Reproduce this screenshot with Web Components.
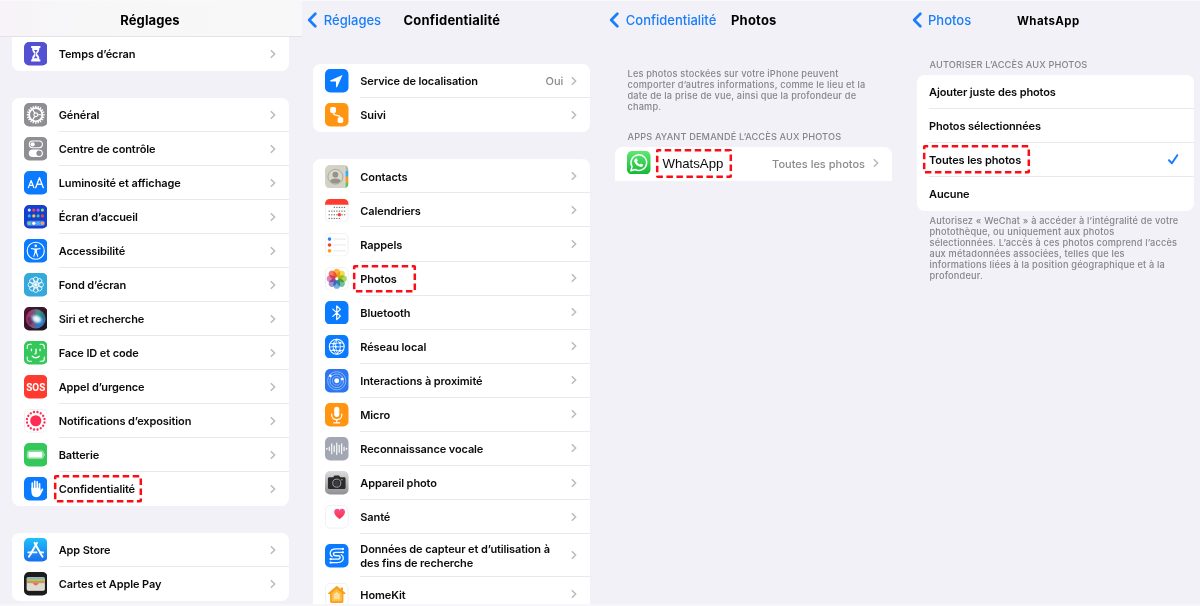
<!DOCTYPE html>
<html lang="fr">
<head>
<meta charset="utf-8">
<title>Réglages</title>
<style>
html,body{margin:0;height:100%;overflow:hidden}
body{background:#f2f1f7;font-family:Inter,"Liberation Sans",sans-serif;color:#0b0b0c}
</style>
</head>
<body>
<settings-board>
  <phone-screen style="--gutter:11.7px">
    <nav-bar slot="bar" frosted><span slot="title">Réglages</span></nav-bar>
    <settings-card cut style="margin-top:0">
      <settings-row icon="hourglass" nav>Temps d’écran</settings-row>
    </settings-card>
    <settings-card style="margin-top:27px">
      <settings-row icon="gear" nav>Général</settings-row>
      <settings-row icon="toggles" nav>Centre de contrôle</settings-row>
      <settings-row icon="aa" nav>Luminosité et affichage</settings-row>
      <settings-row icon="home" nav>Écran d’accueil</settings-row>
      <settings-row icon="access" nav>Accessibilité</settings-row>
      <settings-row icon="flower" nav>Fond d’écran</settings-row>
      <settings-row icon="siri" nav>Siri et recherche</settings-row>
      <settings-row icon="face" nav>Face ID et code</settings-row>
      <settings-row icon="sos" nav>Appel d’urgence</settings-row>
      <settings-row icon="exposure" nav>Notifications d’exposition</settings-row>
      <settings-row icon="battery" nav>Batterie</settings-row>
      <settings-row icon="hand" nav mark="42 2.5 88 27.5">Confidentialité</settings-row>
    </settings-card>
    <settings-card style="margin-top:27px">
      <settings-row icon="store" nav>App Store</settings-row>
      <settings-row icon="wallet" nav>Cartes et Apple Pay</settings-row>
    </settings-card>
  </phone-screen>

  <phone-screen style="--gutter:11.3px">
    <nav-bar slot="bar" back="Réglages" style="--title:101.500px;--lead:5.300px"><span slot="title" style="letter-spacing:.2px">Confidentialité</span></nav-bar>
    <settings-card style="margin-top:27px">
      <settings-row icon="location" nav value="Oui">Service de localisation</settings-row>
      <settings-row icon="tracking" nav>Suivi</settings-row>
    </settings-card>
    <settings-card style="margin-top:27.300px;--row:34.080px">
      <settings-row icon="contacts" nav>Contacts</settings-row>
      <settings-row icon="calendar" nav>Calendriers</settings-row>
      <settings-row icon="reminders" nav>Rappels</settings-row>
      <settings-row icon="photos" nav mark="40 3.200 63 27.5">Photos</settings-row>
      <settings-row icon="bluetooth" nav>Bluetooth</settings-row>
      <settings-row icon="globe" nav>Réseau local</settings-row>
      <settings-row icon="nearby" nav>Interactions à proximité</settings-row>
      <settings-row icon="mic" nav>Micro</settings-row>
      <settings-row icon="voice" nav>Reconnaissance vocale</settings-row>
      <settings-row icon="camera" nav>Appareil photo</settings-row>
      <settings-row icon="health" nav>Santé</settings-row>
      <settings-row icon="sensor" nav style="--row:43.3px">Données de capteur et d’utilisation à<br>des fins de recherche</settings-row>
      <settings-row icon="homekit" nav>HomeKit</settings-row>
    </settings-card>
  </phone-screen>

  <phone-screen style="--gutter:12px">
    <nav-bar slot="bar" back="Confidentialité" style="--title:128px;--lead:6.300px"><span slot="title" style="letter-spacing:.2px">Photos</span></nav-bar>
    <settings-note style="margin-top:32px">Les photos stockées sur votre iPhone peuvent<br>comporter d’autres informations, comme le lieu et la<br>date de la prise de vue, ainsi que la profondeur de<br>champ.</settings-note>
    <settings-note caption style="margin-top:19.500px">APPS AYANT DEMANDÉ L’ACCÈS AUX PHOTOS</settings-note>
    <settings-card flat style="margin-top:3.5px">
      <settings-row icon="whatsapp" nav big value="Toutes les photos" mark="41 2.300 76 29">WhatsApp</settings-row>
    </settings-card>
  </phone-screen>

  <phone-screen style="--gutter:12px">
    <nav-bar slot="bar" back="Photos" style="--title:112px;--lead:6.500px"><span slot="title" style="font-size:11.5px;letter-spacing:.4px">WhatsApp</span></nav-bar>
    <settings-note caption style="margin-top:22.500px">AUTORISER L’ACCÈS AUX PHOTOS</settings-note>
    <settings-card plain style="margin-top:4.5px">
      <settings-row>Ajouter juste des photos</settings-row>
      <settings-row>Photos sélectionnées</settings-row>
      <settings-row checked mark="6 2 107 28.5">Toutes les photos</settings-row>
      <settings-row>Aucune</settings-row>
    </settings-card>
    <settings-note style="margin-top:5.500px">Autorisez « WeChat » à accéder à l’intégralité de votre<br>photothèque, ou uniquement aux photos<br>sélectionnées. L’accès à ces photos comprend l’accès<br>aux métadonnées associées, telles que les<br>informations liées à la position géographique et à la<br>profondeur.</settings-note>
  </phone-screen>
</settings-board>

<script>
const tile = (fill, inner) => `<rect width="24" height="24" rx="5.2" fill="${fill}"/>${inner}`;
const whiteTile = inner => `<rect x=".4" y=".4" width="23.2" height="23.2" rx="5" fill="#fff" stroke="#ececef" stroke-width=".8"/>${inner}`;
const ring = (n, f) => Array.from({length:n}, (_, i) => f(i * 360 / n, i)).join('');
const line = (d, w = 1.3, c = '#fff') => `<path d="${d}" fill="none" stroke="${c}" stroke-width="${w}" stroke-linecap="round" stroke-linejoin="round"/>`;
const dots = (pts, r) => pts.map(([x, y, c]) => `<circle cx="${x}" cy="${y}" r="${r}" fill="${c}"/>`).join('');

const ICONS = {
  hourglass: tile('#5350d3', `<path d="M7.3 4.2h9.4v1.9h-1c0 3-1 4.300-2.500 5.900 1.500 1.600 2.500 2.900 2.500 5.900h1v1.900H7.300v-1.900h1c0-3 1-4.300 2.500-5.900-1.500-1.600-2.500-2.900-2.500-5.900h-1z" fill="#fff"/><path d="M10.200 8.200h3.600L12.300 10.400v4l1.700 2.200H10l1.700-2.200v-4z" fill="#5350d3"/>`),
  gear: tile('#8e8e93', ring(20, a => `<rect x="11.3" y="2.800" width="1.400" height="2.500" fill="#fff" transform="rotate(${a} 12 12)"/>`) + `<circle cx="12" cy="12" r="6.700" fill="none" stroke="#fff" stroke-width="1.700"/><circle cx="12" cy="12" r="1.900" fill="none" stroke="#fff" stroke-width="1.100"/>` + line('M13.900 12H18.500M11 10.300L8.700 6.300M11 13.700L8.700 17.700', 1.2)),
  toggles: tile('#8e8e93', `<rect x="5.400" y="4.100" width="13.400" height="6.800" rx="3.400" fill="none" stroke="#fff" stroke-width="1.100"/><circle cx="8.800" cy="7.500" r="2.200" fill="#fff"/><rect x="4.900" y="12.700" width="14.400" height="7.800" rx="3.900" fill="#fff"/><circle cx="15.400" cy="16.600" r="2.700" fill="#8e8e93"/>`),
  aa: tile('#0a7aff', line('M4.500 17L7.300 9.700L10.100 17M5.500 14.600H9.100', 1.25) + line('M11.900 17L15.800 6.800L19.700 17M13.200 13.500H18.400', 1.35)),
  home: tile('#1540cf', `<rect x="2.800" y="16" width="18.400" height="5.300" rx="1.800" fill="#5c8be6"/>` + dots([[5.400,5.200,'#cfe0f5'],[10,5.200,'#fb4257'],[14.400,5.200,'#a868da'],[18.800,5.200,'#8be15c'],[5.400,11.200,'#27b6f6'],[10,11.200,'#ffc33d'],[14.400,11.200,'#3fbfa6'],[18.800,11.200,'#f5413f'],[5.400,18.700,'#67dd83'],[10,18.700,'#fff'],[14.400,18.700,'#38bdf8'],[18.800,18.700,'#ffa24a']], 1.65)),
  access: tile('#0a7aff', `<circle cx="12" cy="12" r="8.700" fill="none" stroke="#fff" stroke-width="1.100"/><circle cx="12" cy="7" r="1.300" fill="#fff"/><path d="M7.200 9.200L11 9.700h2l3.800-.5v.9l-3.500.9v2.600l1.300 4.400-.9.300-1.500-4h-.4l-1.500 4-.9-.3 1.300-4.400v-2.600l-3.500-.9z" fill="#fff"/>`),
  flower: tile('#35a9dc', ring(8, a => `<circle cx="12" cy="6.700" r="2.500" fill="none" stroke="#fff" stroke-width=".85" transform="rotate(${a} 12 12)"/>`) + ring(8, a => `<circle cx="12" cy="9.900" r="1.400" fill="none" stroke="#fff" stroke-width=".5" transform="rotate(${a} 12 12)"/>`) + `<circle cx="12" cy="12" r="1.200" fill="#fff"/>`),
  siri: `<defs><linearGradient id="s1" x1="0" x2="1"><stop offset="0" stop-color="#b3265c"/><stop offset=".42" stop-color="#7a5a78"/><stop offset=".6" stop-color="#3c9b90"/><stop offset="1" stop-color="#1c6f70"/></linearGradient><radialGradient id="s2"><stop offset="0" stop-color="#fff"/><stop offset=".45" stop-color="#d3e6f6" stop-opacity=".95"/><stop offset="1" stop-color="#4aa5d8" stop-opacity="0"/></radialGradient><linearGradient id="s3" x1="0" x2="1" y1="0" y2="1"><stop offset="0" stop-color="#541233"/><stop offset="1" stop-color="#16161f"/></linearGradient></defs>` + tile('url(#s3)', `<circle cx="12" cy="12" r="9.800" fill="url(#s1)"/><path d="M12.500 12.500L21.800 11a9.800 9.800 0 0 1-11 10.700z" fill="#2c6fd0" opacity=".75"/><path d="M3 11c4-2 7 0 9 3-3 1-4 3-6 5z" fill="#3b2152" opacity=".5"/><ellipse cx="13" cy="12.300" rx="7.500" ry="5.500" fill="url(#s2)" transform="rotate(25 13 12.300)"/><circle cx="12" cy="12" r="9.800" fill="none" stroke="#8aa4b4" stroke-opacity=".35" stroke-width=".5"/>`),
  face: tile('#34c759', line('M3.300 7.600V6c0-1.700 1-2.700 2.700-2.700h1.600M16.400 3.300H18c1.700 0 2.700 1 2.700 2.700v1.600M20.700 16.400V18c0 1.700-1 2.700-2.700 2.700h-1.600M7.600 20.700H6c-1.700 0-2.700-1-2.700-2.700v-1.600', 1.15) + line('M7.600 8.300V9.900M16.400 8.300V9.900M12.300 8.300V12.200c0 .7-.3 1-1.100 1M8.400 15.600c2 2 5.200 2 7.200 0', 1.35)),
  sos: tile('#ff3b30', `<text x="12" y="16.300" text-anchor="middle" font-family="Roboto,Inter,sans-serif" font-size="11.900" font-weight="700" textLength="19.400" lengthAdjust="spacingAndGlyphs" fill="#fff">SOS</text>`),
  exposure: whiteTile(`<circle cx="12" cy="12" r="5.700" fill="#ff2d55"/>` + ring(16, a => `<circle cx="12" cy="2.900" r="1.200" fill="#ff2d55" transform="rotate(${a + 11} 12 12)"/>`)),
  battery: tile('#34c759', `<rect x="3.300" y="7.900" width="16.600" height="8" rx="2" fill="#fff" fill-opacity=".35" stroke="#fff" stroke-opacity=".55" stroke-width=".7"/><rect x="4.600" y="9.100" width="14" height="5.600" rx="1" fill="#fff"/><path d="M20.700 10.500c1 .3 1 2.500 0 2.800z" fill="#fff" opacity=".7"/>`),
  hand: tile('#0a7aff', line('M8.500 13V6.400M11 12V4.600M13.500 12V5M15.800 13V7', 1.85) + `<path d="M7.600 11h9.100v3l1.300-1.800c.6-.8 2-.3 1.600.7l-2.500 5c-.9 1.900-2.300 2.700-4.600 2.700-3.300 0-4.900-2-4.900-5.200z" fill="#fff"/><path d="M9.750 5.500v6M12.250 5v6M14.700 5.500v6" stroke="#0a7aff" stroke-width=".5" stroke-opacity=".7"/>`),
  store: `<defs><linearGradient id="as" x2="0" y2="1"><stop stop-color="#1fc2fb"/><stop offset="1" stop-color="#1a6df0"/></linearGradient></defs>` + tile('url(#as)', line('M13.200 5L6.300 17M10.800 5L17.700 17', 2) + line('M4.400 14.700H12.700M16.500 14.700H19.600M5.600 18.200L5 19.200M18.400 18.200L19 19.200', 1.9)),
  wallet: tile('#1c1c1e', `<rect x="2.700" y="5" width="18.600" height="14.200" rx="1.800" fill="#d4d2c6"/><path d="M3 6.500c.3-.9.800-1.200 1.500-1.200h15c.7 0 1.200.3 1.500 1.200v1.300H3z" fill="#7bb3c9"/><rect x="3" y="7.400" width="18" height="1.800" fill="#e0b445"/><rect x="3" y="9.200" width="18" height="1.600" fill="#8db35c"/><path d="M3 10.800h18v.9h-5.700c-.8 0-1 2.200-3.300 2.200s-2.500-2.200-3.300-2.200H3z" fill="#ee6a5f"/><path d="M3 11.500h6c.8 0 1 1.600 3 1.600s2.200-1.600 3-1.600h6V17.700c0 .8-.5 1.200-1.200 1.200H4.200c-.7 0-1.200-.4-1.200-1.200z" fill="#dedbd0"/><path d="M8.700 11.600c.8 0 1.100 2.200 3.300 2.200s2.500-2.200 3.300-2.200z" fill="#ee6a5f"/>`),
  location: tile('#0a7aff', `<path d="M17.900 6.100L5.700 11.600c-.7.4-.5 1.200.3 1.200h5.200v5.200c0 .8.900 1 1.200.3z" fill="#fff"/>`),
  tracking: tile('#ff9510', `<rect x="5.300" y="4.200" width="5.900" height="5.900" rx="1.600" fill="#fff"/><rect x="12.900" y="14.600" width="5.700" height="5.700" rx="1.600" fill="#fff"/>` + line('M8.300 9.500c0 5 7.500 1.500 7.500 6', 1.35)),
  contacts: `<defs><clipPath id="cc"><rect width="24" height="24" rx="5.200"/></clipPath></defs><g clip-path="url(#cc)"><rect width="24" height="24" fill="#d3d2c6"/><path d="M20.600 0H24v6h-3.400z" fill="#b7b5ab"/><path d="M20.600 6H24v6h-3.400z" fill="#3cabf2"/><path d="M20.600 12H24v6h-3.400z" fill="#fb9520"/><path d="M20.600 18H24v6h-3.400z" fill="#4dc95f"/><path d="M20.600 0v24" stroke="#e8e8e0" stroke-width=".6"/><circle cx="10.600" cy="12" r="7.600" fill="#d9d8cd" stroke="#a5a399" stroke-width=".9"/><circle cx="10.600" cy="9.900" r="2.900" fill="#96948a"/><path d="M5.200 16.300c1.300-3.300 9.500-3.300 10.800 0-2.700 3.500-8.100 3.500-10.800 0z" fill="#96948a"/></g>`,
  calendar: whiteTile(`<path d="M0 5.800V5C0 2 2 0 5 0h14c3 0 5 2 5 5v.8z" fill="#ff3b30"/>` + [[8.900,8.600,5],[3.700,12.400,7],[3.700,16.100,7],[3.700,19.900,5]].map(([x,y,n]) => Array.from({length:n}, (_, i) => `<rect x="${x + i * 2.600}" y="${y - .6}" width="1.300" height="1.200" fill="#77777c"/>`).join('')).join('') + `<circle cx="14.700" cy="16.100" r="1.800" fill="#ff3b30"/>`),
  reminders: whiteTile(dots([[4.600,6.200,'#2f86f6'],[4.600,12.200,'#f0413d'],[4.600,18.200,'#f99d1c']], 1.85) + line('M9 6.200H21M9 12.200H21M9 18.200H21', .7, '#dcdce0')),
  photos: whiteTile(ring(8, (a, i) => `<ellipse cx="12" cy="6.200" rx="3.500" ry="4.500" fill="${['#fbab2e','#f5d630','#a3cf4c','#5bb88f','#5ba8e2','#9680cc','#d873ae','#f5685c'][i]}" fill-opacity=".88" style="mix-blend-mode:multiply" transform="rotate(${a} 12 12)"/>`)),
  bluetooth: tile('#0a7aff', line('M8 8.300L15.700 15.500L12 19V5L15.700 8.500L8 15.700', 1.25)),
  globe: tile('#0a7aff', `<circle cx="12" cy="12" r="7.600" fill="none" stroke="#fff" stroke-width="1.100"/>` + line('M12 4.400c-5 4-5 11 0 15.200M12 4.400c5 4 5 11 0 15.200M5.500 8.300C9 10.500 15 6.500 18.500 8.500M4.500 12.500C9 10.500 14 13.500 19.500 11.500M5.500 15.800C9 14.600 15 17.500 18.500 15.500M12 4.400L10.500 12L13 19.500', .85) + dots([[9,8.900,'#fff'],[15.300,8,'#fff'],[11,12,'#fff'],[8.800,15.200,'#fff'],[15.300,16,'#fff']], 1.15)),
  nearby: tile('#2c77f0', `<circle cx="12" cy="12" r="9.300" fill="none" stroke="#a9cbfb" stroke-width=".75"/><circle cx="12" cy="12" r="7" fill="none" stroke="#a9cbfb" stroke-width=".8"/><circle cx="12" cy="12" r="4.500" fill="none" stroke="#8db9fa" stroke-width=".8"/>` + dots([[12,12,'#fff']], 2.5) + dots([[5.400,7,'#fff'],[17.600,10.300,'#fff']], 1.35)),
  mic: tile('#ff9510', `<rect x="9.400" y="3.800" width="5.200" height="10.400" rx="2.600" fill="#fff"/>` + line('M6.900 11.300v1.100c0 6 10.200 6 10.200 0v-1.100M12 17v3M9 20.200h6', 1.25)),
  voice: tile('#a3a6b3', [[1.900,.4],[4.400,1.700],[6.900,5],[9.400,3],[12,5.900],[14.500,3.600],[17,5],[19.500,1.700],[22,.4]].map(([x,h]) => line(`M${x} ${12-h}V${12+h}`, 1.15)).join('')),
  camera: `<defs><linearGradient id="cg" x2="0" y2="1"><stop stop-color="#dcdce0"/><stop offset="1" stop-color="#8f8f94"/></linearGradient></defs>` + tile('url(#cg)', `<path d="M4.500 6.500h3.800l1-1.400c.3-.4.600-.5 1-.5h3.400c.4 0 .7.100 1 .5l1 1.400h3.800c1 0 1.500.6 1.500 1.500v8.800c0 1-.5 1.500-1.500 1.500h-15c-1 0-1.500-.5-1.500-1.500V8c0-.9.500-1.500 1.500-1.500z" fill="#2b2b2e"/><circle cx="12" cy="12.400" r="4.100" fill="#2b2b2e" stroke="#b4b4b8" stroke-width=".9"/><circle cx="12" cy="12.400" r="2.600" fill="#3c3c40"/><circle cx="17.300" cy="8.900" r=".7" fill="#f5c518"/>`),
  health: `<defs><linearGradient id="hg" x2="0" y2="1"><stop stop-color="#fb4f93"/><stop offset="1" stop-color="#f8323a"/></linearGradient></defs>` + whiteTile(`<path d="M14.900 14.400c-3.700-2.600-5.500-4.800-5.500-7.200 0-3.500 4-4.300 5.500-1.800 1.500-2.500 5.500-1.700 5.500 1.800 0 2.400-1.800 4.600-5.500 7.200z" fill="url(#hg)"/>`),
  sensor: tile('#0a7aff', line('M18.300 5H11.500C7.600 5 5.300 6.700 5.300 9.600c0 1.600.8 2.700 2 3.400M18.300 8.500H11c-3.200 0-3.200 3.500 0 3.500h2c3.200 0 3.200 3.500 0 3.500H5.700M5.700 19h6.800c3.900 0 6.200-1.700 6.200-4.600 0-1.600-.8-2.700-2-3.400', 1.3) + dots([[18.300,5,'#fff'],[18.300,8.500,'#fff'],[5.700,15.500,'#fff'],[5.700,19,'#fff']], 1.15)),
  homekit: whiteTile(`<path d="M12 2.800L3.300 10.200c-.5.500-.2 1.100.4 1.100h1.500V19c0 .9.500 1.400 1.400 1.400h10.800c.9 0 1.400-.5 1.400-1.400v-7.700h1.500c.6 0 .9-.6.4-1.100L18.300 8V4.700h-2.200v1.500z" fill="#f99f1e"/><path d="M12 6.200L6.900 10.500v8.200h10.200v-8.200z" fill="#fcc04a"/><path d="M12 9.200L9 11.700v5h6v-5z" fill="#fde09a"/>`),
  whatsapp: `<defs><linearGradient id="wa" x2="0" y2="1"><stop stop-color="#5fe873"/><stop offset="1" stop-color="#12b935"/></linearGradient></defs>` + tile('url(#wa)', `<path d="M4 20.100l1.200-4.100a8 8 0 1 1 3 2.900z" fill="none" stroke="#fff" stroke-width="1.500" stroke-linejoin="round"/><path d="M9.200 7.700c.4-.2.900-.1 1.100.4l.6 1.500c.1.300 0 .5-.8 1.400.8 1.500 1.700 2.300 3.200 2.900.8-1 .9-1.100 1.200-1l1.700.8c.3.200.3.400.2.900-.3 1.300-1.600 1.800-2.800 1.600-3-.6-5.500-3-6.100-5.200-.4-1.400.3-2.700 1.700-3.300z" fill="#fff"/>`)
};

const define = (name, css, html, ready) => {
  const tpl = document.createElement('template');
  tpl.innerHTML = `<style>${css}</style>${html}`;
  customElements.define(name, class extends HTMLElement {
    constructor() {
      super();
      this.attachShadow({mode: 'open'}).append(tpl.content.cloneNode(true));
      if (ready) ready(this, this.shadowRoot);
    }
  });
};

define('settings-board', `:host{display:grid;grid-template-columns:302px 301px 302px 295px;height:606px;box-sizing:border-box;overflow:hidden;border-top:1px solid #f9f9fc;border-bottom:2px solid #f7f7fb;background:#f2f1f7}`, `<slot></slot>`);

define('phone-screen', `:host{display:flex;flex-direction:column;min-width:0;min-height:0;overflow:hidden}main{display:flex;flex-direction:column;padding-left:var(--gutter);min-height:0}`, `<slot name="bar"></slot><main><slot></slot></main>`);

define('nav-bar', `
:host{display:grid;grid-template-columns:var(--title) 1fr;align-items:center;height:36px;box-sizing:border-box;flex:none}
:host([frosted]){display:flex;justify-content:center;background:linear-gradient(90deg,#f7f3f8,#f7f7f8 28%,#f8f8f8);border-bottom:1px solid #e3e2e6}
.back{display:flex;align-items:center;gap:6.500px;padding-left:var(--lead);color:#1a7dfa;font-size:13px;font-weight:500;white-space:nowrap;line-height:18px;margin-top:2px}
.back svg{flex:none}
:host([frosted]) .back{display:none}
.title{font-size:13px;font-weight:700;line-height:18px;color:#000;white-space:nowrap;margin-top:2px;letter-spacing:.1px}
:host([frosted]) .title{margin:3px 2px 0 0}`,
`<div class="back"><svg width="10" height="16" viewBox="0 0 10 16"><path d="M8.300 1.800L2.200 8l6.100 6.200" fill="none" stroke="#1a7dfa" stroke-width="2.700" stroke-linecap="round" stroke-linejoin="round"/></svg><span></span></div><div class="title"><slot name="title"></slot></div>`,
(host, root) => { root.querySelector('.back span').textContent = host.getAttribute('back') || ''; });

define('settings-card', `
:host{display:flex;flex-direction:column;flex:none;width:277px;background:#fff;border-radius:7.5px}
:host([cut]){border-radius:0 0 7.5px 7.5px}
:host([flat]){border-radius:7.5px 7.5px 0 0}
:host([plain]){width:276.500px}
::slotted(:last-child){--rule:transparent}`, `<slot></slot>`);

define('settings-row', `
:host{display:flex;height:var(--row,34px);flex:none;padding-left:12px;position:relative}
.icon{width:23.500px;margin-right:11.500px;display:flex;align-items:center}
.icon svg{display:block;width:23.500px;height:23.500px}
:host([big]) .icon{padding-bottom:2.500px}
.body{flex:1;display:flex;align-items:center;border-bottom:1px solid var(--rule,#e9e9ec);padding-right:13px;font-size:11px;font-weight:600;line-height:14.500px;white-space:nowrap;box-sizing:border-box}
.label{flex:1;letter-spacing:-.11px;padding-top:2px}
:host([big]) .label{font:400 13.200px/16px "Liberation Sans",sans-serif;padding:1px 0 0 .5px;letter-spacing:0}
.value{color:#8b8b90;margin-right:8px;font-weight:500;padding-top:2px}
.mark{position:absolute;overflow:visible;pointer-events:none}`,
`<div class="icon"></div><div class="body"><span class="label"><slot></slot></span><span class="value"></span><span class="end"></span></div>`,
(host, root) => {
  const icon = root.querySelector('.icon');
  const name = host.getAttribute('icon');
  if (name) icon.innerHTML = `<svg viewBox="0 0 24 24">${ICONS[name]}</svg>`; else icon.remove();
  const value = root.querySelector('.value');
  if (host.hasAttribute('value')) value.textContent = host.getAttribute('value'); else value.remove();
  const end = root.querySelector('.end');
  end.style.display = 'flex';
  if (host.hasAttribute('nav')) end.innerHTML = `<svg width="6" height="10" viewBox="0 0 6 10"><path d="M1.300 1.700L4.700 5l-3.400 3.300" fill="none" stroke="#bcbcc0" stroke-width="1.600" stroke-linecap="round" stroke-linejoin="round"/></svg>`;
  if (host.hasAttribute('checked')) end.innerHTML = `<svg width="14" height="12" viewBox="0 0 14 12"><path d="M2 7.200L4.900 10.200L10.300 2.200" fill="none" stroke="#1a7dfa" stroke-width="2" stroke-linecap="round" stroke-linejoin="round"/></svg>`;
  if (host.hasAttribute('mark')) {
    const [x, y, w, h] = host.getAttribute('mark').split(' ').map(Number);
    root.querySelector('.body').insertAdjacentHTML('beforeend', `<svg class="mark" style="left:${x}px;top:${y}px" width="${w}" height="${h}"><rect x="1.200" y="1.200" width="${w - 2.4}" height="${h - 2.4}" rx=".5" fill="none" stroke="#fb0d17" stroke-width="2.500" stroke-dasharray="6.500 3.500" stroke-dashoffset="3"/></svg>`);
  }
});

define('settings-note', `:host{display:block;margin-left:12.500px;font-size:9.200px;font-weight:500;line-height:10.900px;color:#85858a;white-space:nowrap;letter-spacing:.19px}:host([caption]){font-size:9.200px;letter-spacing:.14px}`, `<slot></slot>`);
</script>
</body>
</html>
